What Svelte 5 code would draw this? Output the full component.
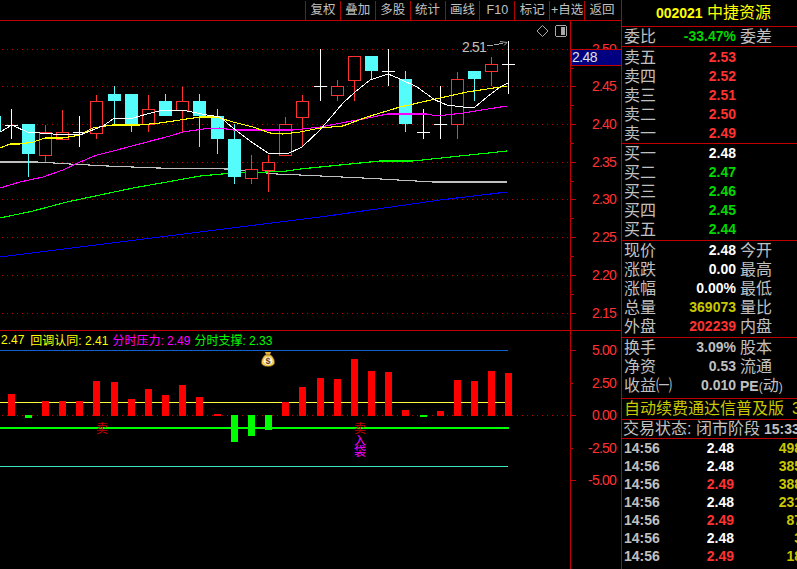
<script>
  const tools = ['复权','叠加','多股','统计','画线','F10','标记','+自选','返回'];
  // c: centre x, h: high, l: low, t/b: body top/bottom, k: r(ed hollow) c(yan filled) w(hite doji)
  const candles = [
    [11,109,139,125,125,'w'],[28,124,177,124,154,'c'],[45,125,162,132,155,'r'],[62,110,139,132,139,'r'],
    [79,116,147,132,132,'w'],[96,95,139,101,133,'r'],[114,86,124,94,101,'c'],[131,94,132,94,124,'c'],
    [148,95,132,109,124,'r'],[165,94,116,101,116,'c'],[182,87,132,101,110,'r'],[199,94,147,101,116,'c'],
    [217,109,154,116,139,'c'],[234,124,184,139,177,'c'],[251,155,184,169,178,'r'],[268,155,192,162,170,'r'],
    [285,117,155,124,155,'r'],[302,95,147,101,117,'r'],[320,49,101,86,86,'w'],[337,80,101,86,95,'r'],
    [354,56,101,56,80,'r'],[371,56,79,56,71,'c'],[388,49,86,71,71,'w'],[405,71,132,79,124,'c'],
    [423,109,139,132,132,'w'],[440,86,139,124,124,'w'],[457,72,139,79,124,'r'],[474,71,101,71,79,'c'],
    [491,57,86,64,71,'r'],[508,41,94,64,64,'w']
  ];
  const lines = [
    ['blue','0,257 160,237 320,217 377,209 440,200 507,192'],
    ['silver','0,162 37,162 70,164 107,166 157,168 227,169 257,172 277,174 300,175 363,178 433,182 507,182'],
    ['lime','0,218 33,211 67,202 100,195 133,188 167,182 200,176 233,173 267,172 287,171 300,169 340,165 380,161 413,161 460,156 507,151'],
    ['mag','0,188 20,182 43,177 63,170 80,162 97,155 117,150 147,142 170,136 183,132 203,129 220,128 233,130 293,130 320,127 373,117 387,114 427,114 437,116 463,113 507,106'],
    ['yel','0,148 10,144 20,144 33,142 45,138 63,138 80,135 93,128 112,125 140,125 160,123 180,120 200,117 217,117 233,122 253,127 270,133 283,134 300,132 320,128 343,126 367,117 400,107 440,98 467,92 507,86'],
    ['wht','0,132 12,125 27,132 53,134 80,135 90,131 103,126 113,119 133,118 147,114 163,110 187,111 207,115 220,117 233,128 253,143 268,153 287,154 302,147 320,130 343,103 355,92 370,80 388,74 400,79 417,87 435,100 447,105 463,107 475,107 487,97 500,87 508,83']
  ];
  const grid = [[49,'2.50'],[86,'2.45'],[124,'2.40'],[162,'2.35'],[199,'2.30'],[237,'2.25'],[275,'2.20'],[313,'2.15']];
  const minor = [68,105,143,181,218,256,294];
  const bars = [
    [8,394],[42,401],[59,401],[76,401],[93,381],[111,382],[128,399],[145,389],[162,395],[179,385],[196,397],[214,414],
    [282,402],[299,387],[317,378],[334,379],[351,359],[368,371],[385,372],[402,410],[437,411],[454,380],[471,381],[488,371],[505,373]
  ];
  const gbars = [[25,415,418],[231,415,442],[248,415,436],[265,415,430],[420,415,417]];
  const indAxis = [[350,'5.00'],[383,'2.50'],[415,'0.00'],[448,'-2.50'],[480,'-5.00']];

  const sells = [['卖五','2.53'],['卖四','2.52'],['卖三','2.51'],['卖二','2.50'],['卖一','2.49']];
  const buys = [['买一','2.48','white'],['买二','2.47','green'],['买三','2.46','green'],['买四','2.45','green'],['买五','2.44','green']];
  const stats = [
    ['现价','2.48','white','今开'],['涨跌','0.00','white','最高'],['涨幅','0.00%','white','最低'],
    ['总量','369073','olive','量比'],['外盘','202239','red','内盘']
  ];
  const stats2 = [['换手','3.09%','股本'],['净资','0.53','流通']];
  const ticks = [
    ['2.48','white','498'],['2.48','white','385'],['2.49','red','388'],['2.48','white','231'],
    ['2.49','red','87'],['2.48','white','3'],['2.49','red','18']
  ];
</script>

<div class="screen">
  <div class="left">
    <nav class="toolbar">
      {#each tools as t}<span class="tool">{t}</span>{/each}
    </nav>

    <svg class="main" width="621" height="309" viewBox="0 21 621 309">
      {#each grid as g}
        <line class="dots" x1="2" x2="570" y1={g[0] + .5} y2={g[0] + .5} />
      {/each}
      {#each lines.slice(0, 3) as l}
        <polyline class={l[0]} points={l[1]} />
      {/each}
      {#each candles as c}
        {#if c[5] === 'w'}
          <line class="wk" x1={c[0] + .5} x2={c[0] + .5} y1={c[1]} y2={c[2]} />
          <line class="wk" x1={c[0] - 6} x2={c[0] + 7} y1={c[3] + .5} y2={c[3] + .5} />
        {:else if c[5] === 'c'}
          <line class="cy" x1={c[0] + .5} x2={c[0] + .5} y1={c[1]} y2={c[2]} />
          <rect class="cyb" x={c[0] - 6} y={c[3]} width="13" height={c[4] - c[3]} />
        {:else}
          <line class="rd" x1={c[0] + .5} x2={c[0] + .5} y1={c[1]} y2={c[3]} />
          <line class="rd" x1={c[0] + .5} x2={c[0] + .5} y1={c[4]} y2={c[2]} />
          <rect class="rdb" x={c[0] - 5.5} y={c[3] + .5} width="12" height={c[4] - c[3]} />
        {/if}
      {/each}
      <rect class="cyb" x="0" y="116" width="1" height="15" />
      {#each lines.slice(3) as l}
        <polyline class={l[0]} points={l[1]} />
      {/each}

      <text class="note" x="462" y="52">2.51</text>
      <path class="arrow" d="M487 45.5h6M494 44.5h5M499 43.5h4M500 41.5l7 1-3 3" />
      <path class="arrow" d="M542.5 25.5l5.5 5.5-5.5 5.5-5.5-5.5z" />
      <rect class="arrow" x="555.5" y="25.5" width="11" height="11" rx="2" />
      <rect class="fillg" x="561" y="27" width="4" height="8" />

      <line class="axis" x1="570.5" x2="570.5" y1="21" y2="330" />
      {#each grid as g}
        <line class="axis" x1="571" x2="576" y1={g[0] + .5} y2={g[0] + .5} />
        <text class="alabel" x="616" y={g[0] + 5}>{g[1]}</text>
      {/each}
      {#each minor as m}
        <line class="axis" x1="571" x2="574" y1={m + .5} y2={m + .5} />
      {/each}
      <rect class="pricebox" x="571" y="49.5" width="50" height="16" />
      <text class="pricetxt" x="572" y="62">2.48</text>
    </svg>

    <div class="indicator">
      <svg width="621" height="238" viewBox="0 331 621 238">
        <line class="h-blue" x1="0" x2="508" y1="350.5" y2="350.5" />
        <line class="h-yel" x1="0" x2="508" y1="402.5" y2="402.5" />
        <line class="dots" x1="2" x2="570" y1="415.5" y2="415.5" />
        <line class="h-cyan" x1="0" x2="508" y1="466.5" y2="466.5" />
        {#each bars as b}
          <rect class="bar-r" x={b[0]} y={b[1]} width="7" height={416 - b[1]} />
        {/each}
        {#each gbars as b}
          <rect class="bar-g" x={b[0]} y={b[1]} width="7" height={b[2] - b[1]} />
        {/each}
        <rect class="bar-g" x="0" y="427" width="509" height="2" />
        <text class="sell" x="96" y="433">卖</text>
        <text class="sell" x="354" y="433">卖</text>
        <text class="buy" x="354" y="445">入</text>
        <text class="buy" x="354" y="456">袋</text>

        <g class="bag">
          <path class="bag-tie" d="M265 352h6l-1 3h-4z" />
          <path class="bag-body" d="M265 355h6c3 3 4 6 3.500 8.500-1 2-3 3-6.500 3s-5.500-1-6.500-3c-.5-2.500.5-5.500 3.500-8.500z" />
          <ellipse class="bag-in" cx="268" cy="361" rx="4.500" ry="4" />
          <text class="bag-s" x="268" y="364">$</text>
        </g>

        <line class="axis" x1="570.5" x2="570.5" y1="331" y2="569" />
        {#each indAxis as a, i}
          <line class="axis" x1="571" x2={i % 2 ? 573 : 576} y1={a[0] + .5} y2={a[0] + .5} />
          <text class="alabel" x="616" y={a[0] + 5}>{a[1]}</text>
        {/each}
      </svg>
      <div class="legend">
        <span class="y l0">2.47</span>
        <span class="y">回调认同: 2.41</span>
        <span class="m">分时压力: 2.49</span>
        <span class="g">分时支撑: 2.33</span>
      </div>
    </div>
  </div>

  <aside class="panel">
    <header class="sec title"><b>002021</b> 中捷资源</header>
    <div class="sec"><div class="row"><span>委比</span><b class="green">-33.47%</b><span>委差</span></div></div>
    <div class="sec pt">
      {#each sells as s}<div class="row"><span>{s[0]}</span><b class="red">{s[1]}</b><span></span></div>{/each}
    </div>
    <div class="sec pb">
      {#each buys as s}<div class="row"><span>{s[0]}</span><b class={s[2]}>{s[1]}</b><span></span></div>{/each}
    </div>
    <div class="sec pb">
      {#each stats as s}<div class="row"><span>{s[0]}</span><b class={s[2]}>{s[1]}</b><span>{s[3]}</span></div>{/each}
    </div>
    <div class="sec pb3">
      {#each stats2 as s}<div class="row"><span>{s[0]}</span><b class="gray">{s[1]}</b><span>{s[2]}</span></div>{/each}
      <div class="row"><span class="nowrap">收益㈠</span><b class="gray">0.010</b><span class="nowrap"><b class="gray">PE</b><small>(</small>动<small>)</small></span></div>
    </div>
    <div class="sec ad"><span>自动续费通达信普及版</span><span class="ad3">3</span></div>
    <div class="sec state"><span>交易状态: 闭市阶段</span><b class="gray">15:33</b></div>
    <div class="ticks">
      {#each ticks as t}
        <div class="tick"><b class="gray">14:56</b><b class={t[1]}>{t[0]}</b><b class="olive">{t[2]}</b></div>
      {/each}
    </div>
  </aside>
</div>

<style>
  :global(body) { margin: 0; background: #000; }
  .screen {
    display: flex; width: 797px; height: 569px; overflow: hidden; background: #000;
    font-family: "Liberation Sans", "Noto Sans CJK SC", sans-serif; color: #c0c0c0;
  }
  .left { width: 621px; flex: none; display: flex; flex-direction: column; }
  svg { display: block; flex: none; }
  .toolbar {
    height: 20px; display: flex; justify-content: flex-end; padding-right: 2px;
    border-bottom: 1px solid #c00000; flex: none;
  }
  .tool {
    width: 34.9px; box-sizing: border-box; border-left: 1px solid #b00000; margin-top: 1px;
    text-align: center; font-size: 12.5px; line-height: 18px; white-space: nowrap; color: #c0c0c0;
  }
  .indicator { border-top: 1px solid #c00000; flex: 1; min-height: 0; position: relative; }
  .legend {
    position: absolute; left: 0; top: 0; box-sizing: border-box;
    height: 17px; display: flex; gap: 4px; padding-left: 1px; align-items: center;
    font-size: 12px; white-space: nowrap;
  }
  .l0 { margin-right: 2px; }
  .y { color: #ffff00; } .m { color: #ff00ff; } .g { color: #00ff00; }

  polyline { shape-rendering: crispEdges; fill: none; stroke-width: 1; }
  line { shape-rendering: crispEdges; fill: none; stroke-width: 1; }
  rect { shape-rendering: crispEdges; }
  .blue, .lime, .silver, .mag, .yel { stroke-width: 1.1; }
  .blue { stroke: #0000ff; } .silver { stroke: #c0c0c0; } .lime { stroke: #00ff00; }
  .mag { stroke: #ff00ff; } .yel { stroke: #ffff00; } .wht { stroke: #ffffff; }
  .dots { stroke: #c00000; stroke-dasharray: 1 4; }
  .wk { stroke: #fff; } .cy { stroke: #54fcfc; } .rd { stroke: #ff3232; }
  .cyb { fill: #54fcfc; } .rdb { stroke: #ff3232; fill: #000; stroke-width: 1; }
  .axis { stroke: #c00000; }
  .alabel { fill: #ff3232; font-size: 14px; letter-spacing: -.8px; text-anchor: end; }
  .note { fill: #c0c0c0; font-size: 14px; letter-spacing: -.8px; }
  .arrow { fill: none; stroke: #a8a8a8; stroke-width: 1; }
  .fillg { fill: #a8a8a8; }
  .pricebox { fill: #000080; stroke: #c00000; }
  .pricetxt { fill: #e0e0e0; font-size: 14px; letter-spacing: -.6px; }
  .h-blue { stroke: #1060d0; } .h-yel { stroke: #ffff40; } .h-cyan { stroke: #40e8c0; }
  .bar-r { fill: #ff0000; } .bar-g { fill: #00ff00; }
  .sell { fill: #c00000; font-size: 12px; }
  .buy { fill: #ff00ff; font-size: 12px; }
  .bag-tie { fill: #e0b040; }
  .bag-body { fill: #f0c850; stroke: #6a4a10; stroke-width: .7; }
  .bag-in { fill: #fff4d0; }
  .bag-s { fill: #804000; font-size: 9px; font-weight: 700; text-anchor: middle; }

  .panel {
    flex: 1; min-width: 0; overflow: hidden; box-sizing: border-box; border-left: 1px solid #c00000;
    font-size: 16px;
  }
  .sec { border-bottom: 1px solid #c00000; }
  .pt { padding-top: 1px; } .pb { padding-bottom: 1px; } .pb3 { padding-bottom: 3px; }
  .title {
    height: 26px; line-height: 26px; text-align: center; color: #ffff00; font-size: 16px;
    padding-left: 8px; white-space: nowrap;
  }
  .title b { font-size: 14px; }
  .row {
    display: grid; grid-template-columns: 65px 43px 1fr; column-gap: 4px; height: 19px; line-height: 19px;
    padding-left: 2px; white-space: nowrap;
  }
  .row b { font-size: 14px; text-align: right; justify-self: end; }
  .nowrap { white-space: nowrap; }
  .nowrap b { font-size: 14px; }
  .nowrap small { font-size: 12px; }
  .red { color: #ff3232; } .green { color: #00d800; } .white { color: #fff; }
  .olive { color: #c8c800; } .gray { color: #c0c0c0; }
  .ad { height: 20px; line-height: 20px; color: #c8c800; padding-left: 2px; white-space: nowrap; display: flex; }
  .ad3 { margin-left: 8px; }
  .state { height: 18px; line-height: 18px; padding-left: 1px; display: flex; gap: 4px; white-space: nowrap; }
  .state b { font-size: 14px; }
  .tick {
    display: grid; grid-template-columns: 40px 70px 68px; width: 180px; height: 18px; line-height: 18px;
    font-size: 14px; padding-left: 2px; white-space: nowrap;
  }
  .tick b:nth-child(2), .tick b:nth-child(3) { text-align: right; }
</style>
